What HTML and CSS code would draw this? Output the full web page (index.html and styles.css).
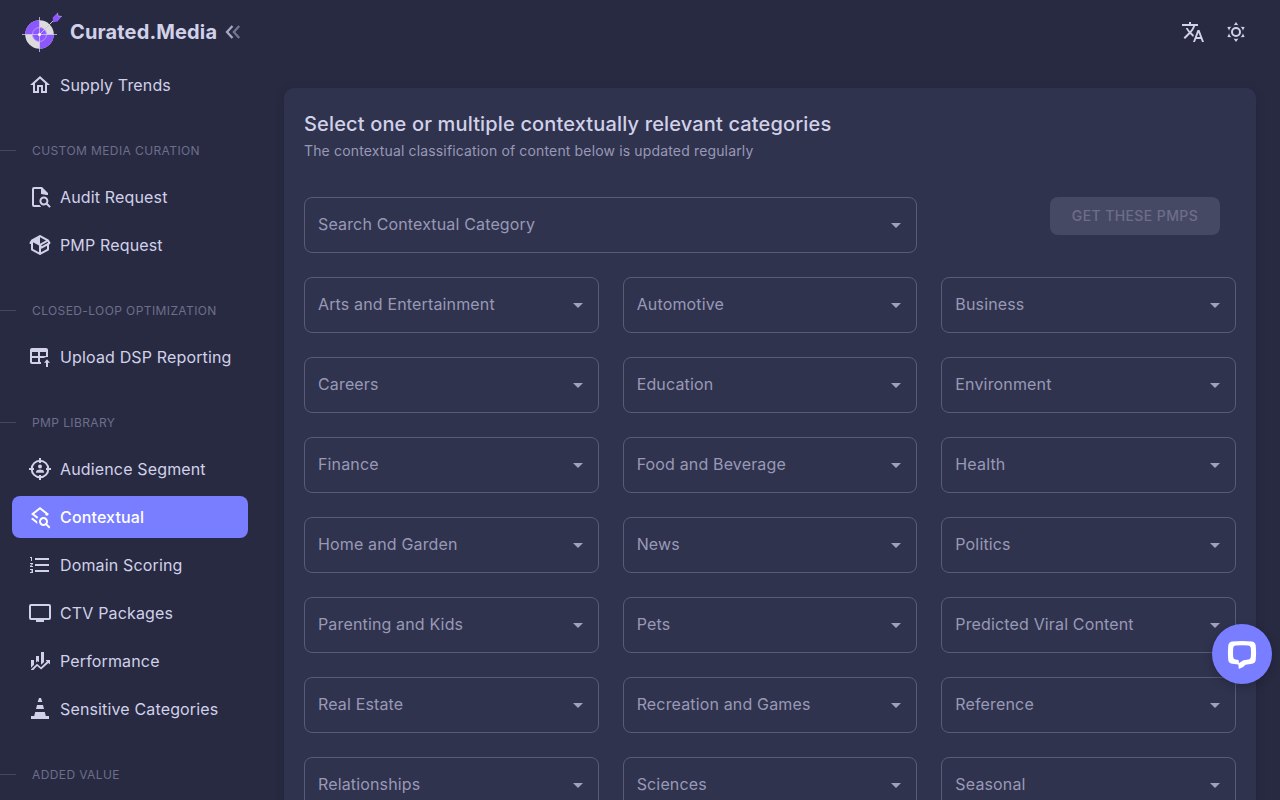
FILE: index.html
```html
<!DOCTYPE html>
<html lang="en">
<head>
<meta charset="utf-8">
<title>Curated.Media</title>
<link rel="stylesheet" href="styles.css">
</head>
<body>
<div class="app">
  <aside class="sidebar">
    <header class="brand">
      <svg class="logo" width="42" height="42" viewBox="0 0 42 42">
        <circle cx="18.5" cy="24.5" r="14.3" fill="#dcdcdc"/>
        <path d="M18.5 24.5V10.2A14.3 14.3 0 0 0 4.2 24.5ZM18.5 24.5V38.8A14.3 14.3 0 0 0 32.8 24.5Z" fill="#8c57ff"/>
        <circle cx="18.5" cy="24.5" r="7" fill="#8c57ff" stroke="#b79aff" stroke-width="1"/>
        <path d="M18.5 7v35M1 24.5h35" stroke="#d5d0e8" stroke-width="1" opacity=".75"/>
        <path d="M18.5 24.5L34 9" stroke="#c9c5d8" stroke-width="1"/>
        <circle cx="18.5" cy="24.5" r="1.5" fill="#fff"/>
        <path d="M32 12.3L31.7 7.400L36.500 2.800L37 6L40.800 6.500L36.500 11.500Z" fill="#8c57ff"/>
        <path d="M36.500 2.800L37 6L40.800 6.500" fill="none" stroke="#b9b3d2" stroke-width=".7"/>
      </svg>
      <span class="brand-name">Curated.Media</span>
      <svg class="collapse" width="22" height="22" viewBox="0 0 24 24" fill="none" stroke-width="2.5"><path d="M11.400 5.500L5.500 12l5.900 6.500" stroke="#a6a7c4"/><path d="M18.800 5.500L12.900 12l5.900 6.500" stroke="#737491"/></svg>
    </header>
    <nav class="menu">
      <a class="item"><svg class="icon" viewBox="0 0 24 24"><path d="M12 5.690L17 10.190V18H15V12H9V18H7V10.190L12 5.690M12 3L2 12H5V20H11V14H13V20H19V12H22L12 3Z"/></svg>Supply Trends</a>
      <div class="section"><span>CUSTOM MEDIA CURATION</span></div>
      <a class="item"><svg class="icon" viewBox="0 0 24 24"><path d="M6 2h8l6 6v2h-1.500L13 9V4H6v16h5.500l1.700 2H6a2 2 0 0 1-2-2V4a2 2 0 0 1 2-2Z"/><path transform="translate(.4 -.6)" d="M19.310 18.900L22.390 22L21 23.390L17.880 20.320C17.190 20.750 16.370 21 15.500 21C13 21 11 19 11 16.500C11 14 13 12 15.500 12C18 12 20 14 20 16.500C20 17.380 19.750 18.210 19.310 18.900M15.500 19C16.880 19 18 17.880 18 16.500C18 15.120 16.880 14 15.500 14C14.120 14 13 15.120 13 16.500C13 17.880 14.120 19 15.500 19Z"/></svg>Audit Request</a>
      <a class="item"><svg class="icon" viewBox="0 0 24 24"><path d="M2,10.96C1.5,10.68 1.35,10.07 1.63,9.59L3.13,7C3.24,6.8 3.41,6.66 3.6,6.58L11.43,2.18C11.59,2.06 11.79,2 12,2C12.21,2 12.41,2.06 12.57,2.18L20.47,6.62C20.66,6.72 20.82,6.88 20.91,7.08L22.36,9.6C22.64,10.08 22.47,10.69 22,10.96L21,11.54V16.5C21,16.88 20.79,17.21 20.47,17.38L12.57,21.82C12.41,21.94 12.21,22 12,22C11.79,22 11.59,21.94 11.43,21.82L3.53,17.38C3.21,17.21 3,16.88 3,16.5V10.96C2.7,11.13 2.32,11.14 2,10.96M12,4.15V4.15L12,10.85V10.85L17.96,7.5L12,4.15M5,15.91L11,19.29V12.58L5,9.21V15.91M19,15.91V12.69L14,15.59C13.67,15.77 13.3,15.76 13,15.6V19.29L19,15.91M13.85,13.36L20.13,9.73L19.55,8.72L13.27,12.35L13.85,13.36Z"/></svg>PMP Request</a>
      <div class="section"><span>CLOSED-LOOP OPTIMIZATION</span></div>
      <a class="item"><svg class="icon" viewBox="0 0 24 24"><path fill-rule="evenodd" d="M4 3H18C19.110 3 20 3.900 20 5V12.080C18.450 11.820 16.920 12.180 15.680 13H12V17H13.080C12.970 17.680 12.970 18.350 13.080 19H4C2.900 19 2 18.110 2 17V5C2 3.900 2.900 3 4 3M4 7V11H10V7H4M12 7V11H18V7H12M4 13V17H10V13H4"/><path d="M19 14.300l3 3.400h-2V22h-2v-4.300h-2Z"/></svg>Upload DSP Reporting</a>
      <div class="section"><span>PMP LIBRARY</span></div>
      <a class="item"><svg class="icon" viewBox="0 0 24 24"><circle cx="12" cy="12" r="8.3" fill="none" stroke="currentColor" stroke-width="2"/><path d="M11 1h2v5h-2ZM11 18h2v5h-2ZM1 11h5v2H1ZM18 11h5v2h-5Z"/><circle cx="12" cy="9.6" r="2"/><path d="M8 15.8v-1c0-1.5 2.4-2.3 4-2.3s4 .8 4 2.3v1Z"/></svg>Audience Segment</a>
      <a class="item active"><svg class="icon" viewBox="0 0 24 24"><path d="M12 2L21 9L19.300 10.800Q18.500 10.300 17 9.900L17.740 9L12 4.530L6.260 9L10.200 12.100L9.200 13.800L3 9ZM3 14.070L4.620 12.810L9.100 16.300L9.400 19Z"/><path d="M19.310 18.900L22.390 22L21 23.390L17.880 20.320C17.190 20.750 16.370 21 15.500 21C13 21 11 19 11 16.500C11 14 13 12 15.500 12C18 12 20 14 20 16.500C20 17.380 19.750 18.210 19.310 18.900M15.500 19C16.880 19 18 17.880 18 16.500C18 15.120 16.880 14 15.500 14C14.120 14 13 15.120 13 16.500C13 17.880 14.120 19 15.500 19Z"/></svg>Contextual</a>
      <a class="item"><svg class="icon" viewBox="0 0 24 24"><path d="M7 5h14v2H7ZM7 11h14v2H7ZM7 17h14v2H7ZM2 4h2v4H3V5H2ZM2 10h3v.9L3.2 13H5v1H2v-.9L3.8 11H2ZM2 16h3v4H2v-1h2v-.5H3v-1h1V17H2Z"/></svg>Domain Scoring</a>
      <a class="item"><svg class="icon" viewBox="0 0 24 24"><path fill-rule="evenodd" d="M3 3h18a2 2 0 0 1 2 2v12a2 2 0 0 1-2 2h-5v2H8v-2H3a2 2 0 0 1-2-2V5a2 2 0 0 1 2-2ZM3 5v12h18V5Z"/></svg>CTV Packages</a>
      <a class="item"><svg class="icon" viewBox="0 0 24 24"><path d="M3 11h3v4.7l-3 3ZM8 7h3v6l-1.5-.8L8 13.5ZM13 3h3v10.3l-3 2.5Z"/><path d="M17.5 11H22v4.5l-1.6-1.6-7.3 6.7-4-3.6L5.4 21H3v-.6l6-5.7 4 3.5 5.9-5.7Z"/></svg>Performance</a>
      <a class="item"><svg class="icon" viewBox="0 0 24 24"><path d="M11 1h2l1.3 4H9.700ZM9 8h6l1 4H8ZM7.2 15h9.6l1 4H21v3H3v-3h3.2Z"/></svg>Sensitive Categories</a>
      <div class="section"><span>ADDED VALUE</span></div>
    </nav>
  </aside>
  <main class="main">
    <header class="topbar">
      <svg class="icon" viewBox="0 0 24 24"><path d="M12.87 15.07l-2.54-2.51.03-.03c1.74-1.94 2.98-4.17 3.71-6.53H17V4h-7V2H8v2H1v1.99h11.17C11.5 7.92 10.44 9.75 9 11.35 8.07 10.32 7.3 9.19 6.69 8h-2c.73 1.63 1.73 3.17 2.98 4.56l-5.09 5.02L4 19l5-5 3.11 3.11.76-2.04zM18.5 10h-2L12 22h2l1.12-3h4.75L21 22h2l-4.5-12zm-2.62 7l1.62-4.33L19.12 17h-3.24z"/></svg>
      <svg class="icon sun" viewBox="0 0 24 24"><path d="M12,7A5,5 0 0,1 17,12A5,5 0 0,1 12,17A5,5 0 0,1 7,12A5,5 0 0,1 12,7M12,9A3,3 0 0,0 9,12A3,3 0 0,0 12,15A3,3 0 0,0 15,12A3,3 0 0,0 12,9M12,2L14.39,5.42C13.65,5.15 12.84,5 12,5C11.16,5 10.35,5.15 9.61,5.42L12,2M3.34,7L7.5,6.65C6.9,7.16 6.36,7.78 5.94,8.5C5.5,9.24 5.25,10 5.11,10.79L3.34,7M3.36,17L5.12,13.23C5.26,14 5.53,14.78 5.95,15.5C6.37,16.24 6.91,16.86 7.5,17.37L3.36,17M20.65,7L18.88,10.79C18.74,10 18.47,9.23 18.05,8.5C17.63,7.78 17.1,7.15 16.5,6.64L20.65,7M20.64,17L16.5,17.36C17.09,16.85 17.62,16.22 18.04,15.5C18.46,14.77 18.73,14 18.87,13.21L20.64,17M12,22L9.59,18.56C10.33,18.83 11.14,19 12,19C12.82,19 13.63,18.83 14.37,18.56L12,22Z"/></svg>
    </header>
    <section class="card">
      <h1 class="title">Select one or multiple contextually relevant categories</h1>
      <p class="subtitle">The contextual classification of content below is updated regularly</p>
      <div class="grid">
        <div class="field wide">Search Contextual Category</div>
        <div class="action"><button class="button" disabled>GET THESE PMPS</button></div>
        <div class="field">Arts and Entertainment</div>
        <div class="field">Automotive</div>
        <div class="field">Business</div>
        <div class="field">Careers</div>
        <div class="field">Education</div>
        <div class="field">Environment</div>
        <div class="field">Finance</div>
        <div class="field">Food and Beverage</div>
        <div class="field">Health</div>
        <div class="field">Home and Garden</div>
        <div class="field">News</div>
        <div class="field">Politics</div>
        <div class="field">Parenting and Kids</div>
        <div class="field">Pets</div>
        <div class="field">Predicted Viral Content</div>
        <div class="field">Real Estate</div>
        <div class="field">Recreation and Games</div>
        <div class="field">Reference</div>
        <div class="field">Relationships</div>
        <div class="field">Sciences</div>
        <div class="field">Seasonal</div>
      </div>
    </section>
  </main>
</div>
<div class="chat"><svg width="32" height="32" viewBox="0 0 32 32"><path d="M6 3.500Q16 2.300 26 3.500Q29.500 4 29.800 8Q30.400 15 29.800 21.500Q29.500 25.300 26 25.800L19.500 26.700Q17.500 29.500 12.800 31L12.300 26.600L6 25.800Q2.500 25.300 2.200 21.500Q1.600 15 2.200 8Q2.500 4 6 3.500Z" fill="#fff"/><path d="M9.500 7.600Q16 7 22.500 7.600Q24.600 7.900 24.800 10Q25.200 15 24.800 19Q24.600 21.300 22.500 21.600L17.500 22.200L13 25L12.600 22L9.500 21.600Q7.400 21.300 7.200 19Q6.800 15 7.200 10Q7.400 7.900 9.500 7.600Z" fill="#777bff"/></svg></div>
</body>
</html>
```
FILE: styles.css
```css
* { box-sizing: border-box; }
body {
  margin: 0;
  height: 800px;
  overflow: hidden;
  background: #282a42;
  color: #d1d1e9;
  font: 400 16px/24px Inter, sans-serif;
  letter-spacing: .15px;
}
.app { display: flex; height: 800px; overflow: hidden; }
.sidebar { width: 260px; flex: none; }
.brand { display: flex; align-items: center; height: 64px; padding-left: 21px; }
.logo { flex: none; margin-bottom: 3px; }
.brand-name { margin-left: 7px; font-size: 20px; font-weight: 700; }
.collapse { margin-left: 5px; }
.menu { display: flex; flex-direction: column; }
.item {
  display: flex;
  align-items: center;
  gap: 8px;
  height: 42px;
  flex: none;
  margin: 0 12px 6px;
  padding-left: 16px;
  border-radius: 8px;
}
.item.active { background: #787eff; color: #fff; font-weight: 500; }
.icon { width: 24px; height: 24px; flex: none; fill: currentColor; }
.section {
  display: flex;
  align-items: center;
  gap: 16px;
  height: 18px;
  margin: 29px 0 17px;
  flex: none;
  color: #6d6e8a;
  font-size: 12px;
  letter-spacing: .4px;
}
.section::before { content: ""; width: 16px; height: 1px; background: #464861; }
.section span { padding-top: 2px; }
.main { flex: 1; padding: 0 24px; }
.topbar { display: flex; align-items: center; justify-content: flex-end; gap: 19px; height: 64px; padding-right: 8px; }
.card {
  margin-top: 24px;
  height: 900px;
  padding: 20px;
  border-radius: 10px;
  background: #30334e;
  box-shadow: 0 2px 10px rgba(20, 21, 33, .22);
}
.title { margin: 0; font-size: 20px; line-height: 32px; font-weight: 500; }
.subtitle { margin: 0; font-size: 14px; line-height: 21px; color: #9899b6; }
.grid { display: grid; grid-template-columns: repeat(3, 1fr); gap: 24px; margin-top: 36px; }
.field {
  display: flex;
  align-items: center;
  justify-content: space-between;
  height: 56px;
  padding: 0 15px 2px 13px;
  border: 1px solid #595b77;
  border-radius: 8px;
  color: #9899b6;
}
.field::after {
  content: "";
  margin-top: 3px;
  border: 5px solid transparent;
  border-top-color: #a0a1bd;
  border-bottom: 0;
}
.wide { grid-column: span 2; }
.action { display: flex; justify-content: flex-end; padding-right: 16px; }
.button {
  width: 170px;
  height: 38px;
  border: 0;
  border-radius: 8px;
  background: #464963;
  color: #6d6e8a;
  font: 500 14px/24px Inter, sans-serif;
  letter-spacing: .4px;
}
.chat {
  position: fixed;
  right: 8px;
  bottom: 116px;
  display: grid;
  place-items: center;
  width: 60px;
  height: 60px;
  border-radius: 50%;
  background: #787eff;
  box-shadow: 0 3px 8px rgba(15, 16, 30, .3);
}
```
